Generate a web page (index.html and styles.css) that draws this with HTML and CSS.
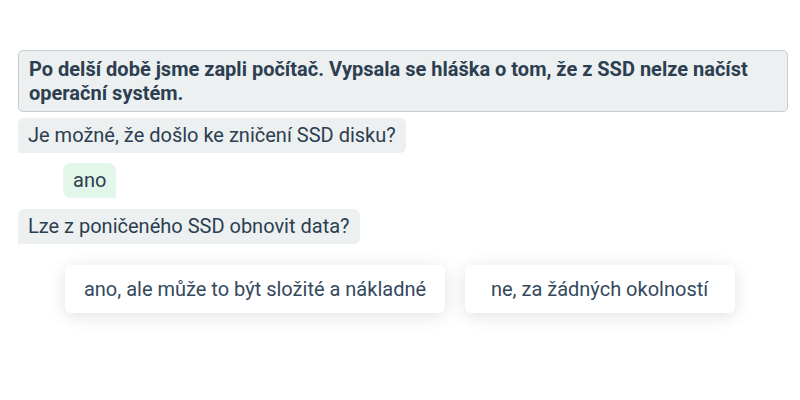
FILE: index.html
```html
<!DOCTYPE html>
<html lang="cs">
<head>
<meta charset="utf-8">
<link rel="stylesheet" href="styles.css">
</head>
<body>
<div class="chat">
  <div class="intro">Po delší době jsme zapli počítač. Vypsala se hláška o tom, že z SSD nelze načíst operační systém.</div>
  <div class="row"><div class="bubble bot">Je možné, že došlo ke zničení SSD disku?</div></div>
  <div class="row user-row"><div class="bubble user">ano</div></div>
  <div class="row"><div class="bubble bot">Lze z poničeného SSD obnovit data?</div></div>
  <div class="choices">
    <button class="choice">ano, ale může to být složité a nákladné</button>
    <button class="choice">ne, za žádných okolností</button>
  </div>
</div>
</body>
</html>
```
FILE: styles.css
```css
html, body {
  margin: 0;
  padding: 0;
  background: #ffffff;
}
body {
  font-family: Roboto, "Noto Sans", sans-serif;
  color: #2c3e50;
  width: 800px;
  height: 400px;
  overflow: hidden;
}
.chat {
  padding: 50px 12px 0 18px;
  display: flex;
  flex-direction: column;
}
.intro {
  background: #ecf0f1;
  border: 1px solid #c6cccf;
  border-radius: 5px;
  padding: 6px 10px 6px 10px;
  font-weight: 700;
  font-size: 20px;
  line-height: 24px;
  color: #2c3e50;
  margin-bottom: 6px;
}
.row {
  display: flex;
}
.user-row {
  padding-left: 45px;
  margin: 10px 0 11px;
}
.bubble {
  font-size: 20px;
  line-height: 23px;
  padding: 6px 10px;
}
.bot {
  background: #ecf0f1;
  border-radius: 6px 6px 6px 0;
}
.user {
  background: #e3f6ea;
  border-radius: 8px 8px 0 8px;
}
.choices {
  display: flex;
  justify-content: center;
  gap: 20px;
  margin: 21px 0 0 -18px;
  width: 800px;
}
.choice {
  font-family: Roboto, "Noto Sans", sans-serif;
  font-size: 20px;
  color: #34495e;
  background: #ffffff;
  border: none;
  border-radius: 6px;
  height: 48px;
  min-width: 270px;
  padding: 0 18.5px;
  box-shadow: 0 3px 18px rgba(0, 0, 0, 0.12);
}
```
